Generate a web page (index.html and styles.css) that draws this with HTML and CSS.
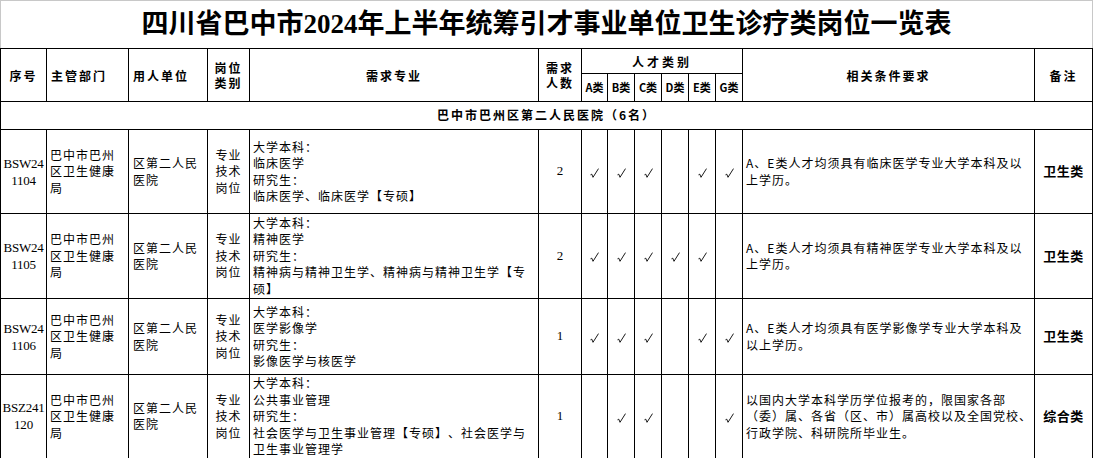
FILE: index.html
```html
<!DOCTYPE html>
<html lang="zh-CN">
<head>
<meta charset="utf-8">
<title>岗位一览表</title>
<link rel="stylesheet" href="styles.css">
</head>
<body>
<div class="sheet">
  <div class="title">四川省巴中市2024年上半年统筹引才事业单位卫生诊疗类岗位一览表</div>
  <table class="grid">
    <colgroup>
      <col class="w46"><col class="w82"><col class="w79"><col class="w42"><col class="w289"><col class="w43">
      <col class="w26"><col class="w27"><col class="w27"><col class="w27"><col class="w27"><col class="w27">
      <col class="w292"><col class="w58">
    </colgroup>
    <thead>
      <tr class="h1">
        <th rowspan="2">序号</th>
        <th rowspan="2" class="left">主管部门</th>
        <th rowspan="2" class="left">用人单位</th>
        <th rowspan="2">岗位类别</th>
        <th rowspan="2">需求专业</th>
        <th rowspan="2">需求人数</th>
        <th colspan="6" class="talent">人才类别</th>
        <th rowspan="2">相关条件要求</th>
        <th rowspan="2">备注</th>
      </tr>
      <tr class="h2">
        <th class="cat">A类</th><th class="cat">B类</th><th class="cat">C类</th><th class="cat">D类</th><th class="cat">E类</th><th class="cat">G类</th>
      </tr>
    </thead>
    <tbody>
      <tr class="section"><td colspan="14">巴中市巴州区第二人民医院（6名）</td></tr>
      <tr class="r1">
        <td class="no">BSW241104</td>
        <td class="dept">巴中市巴州区卫生健康局</td>
        <td class="unit">区第二人民医院</td>
        <td class="kind">专业技术岗位</td>
        <td class="major">大学本科：<br>临床医学<br>研究生：<br>临床医学、临床医学【专硕】</td>
        <td class="num">2</td>
        <td class="chk"><svg class="tick" viewBox="0 0 9 10" width="9" height="10"><path d="M0.5 6.8 L1.8 6.2 L3 9.3 L8.5 0.6"/></svg></td>
        <td class="chk"><svg class="tick" viewBox="0 0 9 10" width="9" height="10"><path d="M0.5 6.8 L1.8 6.2 L3 9.3 L8.5 0.6"/></svg></td>
        <td class="chk"><svg class="tick" viewBox="0 0 9 10" width="9" height="10"><path d="M0.5 6.8 L1.8 6.2 L3 9.3 L8.5 0.6"/></svg></td>
        <td class="chk"></td>
        <td class="chk"><svg class="tick" viewBox="0 0 9 10" width="9" height="10"><path d="M0.5 6.8 L1.8 6.2 L3 9.3 L8.5 0.6"/></svg></td>
        <td class="chk"><svg class="tick" viewBox="0 0 9 10" width="9" height="10"><path d="M0.5 6.8 L1.8 6.2 L3 9.3 L8.5 0.6"/></svg></td>
        <td class="req">A、E类人才均须具有临床医学专业大学本科及以<br>上学历。</td>
        <td class="note">卫生类</td>
      </tr>
      <tr class="r2">
        <td class="no">BSW241105</td>
        <td class="dept">巴中市巴州区卫生健康局</td>
        <td class="unit">区第二人民医院</td>
        <td class="kind">专业技术岗位</td>
        <td class="major">大学本科：<br>精神医学<br>研究生：<br>精神病与精神卫生学、精神病与精神卫生学【专硕】</td>
        <td class="num">2</td>
        <td class="chk"><svg class="tick" viewBox="0 0 9 10" width="9" height="10"><path d="M0.5 6.8 L1.8 6.2 L3 9.3 L8.5 0.6"/></svg></td>
        <td class="chk"><svg class="tick" viewBox="0 0 9 10" width="9" height="10"><path d="M0.5 6.8 L1.8 6.2 L3 9.3 L8.5 0.6"/></svg></td>
        <td class="chk"><svg class="tick" viewBox="0 0 9 10" width="9" height="10"><path d="M0.5 6.8 L1.8 6.2 L3 9.3 L8.5 0.6"/></svg></td>
        <td class="chk"><svg class="tick" viewBox="0 0 9 10" width="9" height="10"><path d="M0.5 6.8 L1.8 6.2 L3 9.3 L8.5 0.6"/></svg></td>
        <td class="chk"><svg class="tick" viewBox="0 0 9 10" width="9" height="10"><path d="M0.5 6.8 L1.8 6.2 L3 9.3 L8.5 0.6"/></svg></td>
        <td class="chk"></td>
        <td class="req">A、E类人才均须具有精神医学专业大学本科及以<br>上学历。</td>
        <td class="note">卫生类</td>
      </tr>
      <tr class="r3">
        <td class="no">BSW241106</td>
        <td class="dept">巴中市巴州区卫生健康局</td>
        <td class="unit">区第二人民医院</td>
        <td class="kind">专业技术岗位</td>
        <td class="major">大学本科：<br>医学影像学<br>研究生：<br>影像医学与核医学</td>
        <td class="num">1</td>
        <td class="chk"><svg class="tick" viewBox="0 0 9 10" width="9" height="10"><path d="M0.5 6.8 L1.8 6.2 L3 9.3 L8.5 0.6"/></svg></td>
        <td class="chk"><svg class="tick" viewBox="0 0 9 10" width="9" height="10"><path d="M0.5 6.8 L1.8 6.2 L3 9.3 L8.5 0.6"/></svg></td>
        <td class="chk"><svg class="tick" viewBox="0 0 9 10" width="9" height="10"><path d="M0.5 6.8 L1.8 6.2 L3 9.3 L8.5 0.6"/></svg></td>
        <td class="chk"></td>
        <td class="chk"><svg class="tick" viewBox="0 0 9 10" width="9" height="10"><path d="M0.5 6.8 L1.8 6.2 L3 9.3 L8.5 0.6"/></svg></td>
        <td class="chk"><svg class="tick" viewBox="0 0 9 10" width="9" height="10"><path d="M0.5 6.8 L1.8 6.2 L3 9.3 L8.5 0.6"/></svg></td>
        <td class="req">A、E类人才均须具有医学影像学专业大学本科及<br>以上学历。</td>
        <td class="note">卫生类</td>
      </tr>
      <tr class="r4">
        <td class="no">BSZ241120</td>
        <td class="dept">巴中市巴州区卫生健康局</td>
        <td class="unit">区第二人民医院</td>
        <td class="kind">专业技术岗位</td>
        <td class="major">大学本科：<br>公共事业管理<br>研究生：<br>社会医学与卫生事业管理【专硕】、社会医学与卫生事业管理学</td>
        <td class="num">1</td>
        <td class="chk"></td>
        <td class="chk"><svg class="tick" viewBox="0 0 9 10" width="9" height="10"><path d="M0.5 6.8 L1.8 6.2 L3 9.3 L8.5 0.6"/></svg></td>
        <td class="chk"><svg class="tick" viewBox="0 0 9 10" width="9" height="10"><path d="M0.5 6.8 L1.8 6.2 L3 9.3 L8.5 0.6"/></svg></td>
        <td class="chk"></td>
        <td class="chk"></td>
        <td class="chk"><svg class="tick" viewBox="0 0 9 10" width="9" height="10"><path d="M0.5 6.8 L1.8 6.2 L3 9.3 L8.5 0.6"/></svg></td>
        <td class="req">以国内大学本科学历学位报考的，限国家各部<br>（委）属、各省（区、市）属高校以及全国党校、<br>行政学院、科研院所毕业生。</td>
        <td class="note">综合类</td>
      </tr>
    </tbody>
  </table>
</div>
</body>
</html>
```

FILE: styles.css
```css
* { box-sizing: border-box; }

body {
  margin: 0;
  background: #fff;
  color: #000;
  font-family: "Noto Sans CJK SC", sans-serif;
  text-spacing-trim: space-all;
}

.sheet { width: 1093px; }

.title {
  height: 48px;
  border: 1px solid #c8c8c8;
  border-bottom: 0;
  display: flex;
  align-items: center;
  justify-content: center;
  font-family: "Liberation Serif", "Noto Sans CJK SC", serif;
  font-weight: 700;
  font-size: 27px;
  line-height: 1;
}

.grid {
  width: 1093px;
  border-collapse: collapse;
  table-layout: fixed;
}

.w46 { width: 46px; }
.w82 { width: 82px; }
.w79 { width: 79px; }
.w42 { width: 42px; }
.w289 { width: 289px; }
.w43 { width: 43px; }
.w26 { width: 26px; }
.w27 { width: 27px; }
.w292 { width: 292px; }
.w58 { width: 58px; }

.grid th,
.grid td {
  border: 1px solid #000;
  padding: 0 3px;
  font-size: 12px;
  line-height: 16.5px;
  letter-spacing: 1px;
  vertical-align: middle;
}

.grid th {
  font-weight: 700;
  letter-spacing: 2px;
  line-height: 15px;
  text-align: center;
}

.grid th.left { text-align: left; padding-left: 4px; }
.grid th.talent { letter-spacing: 3px; }
.grid th.cat {
  font-size: 11px;
  letter-spacing: 0;
  padding: 0;
  white-space: nowrap;
}

.h1 { height: 25px; }
.h2 { height: 28px; }
.section { height: 28px; }
.r1 { height: 84px; }
.r2 { height: 85px; }
.r3 { height: 76px; }
.r4 { height: 83px; }

.section td {
  text-align: center;
  font-weight: 700;
  letter-spacing: 2px;
}

.grid td.no {
  font-family: "Liberation Serif", serif;
  font-size: 13px;
  letter-spacing: -0.2px;
  line-height: 17px;
  text-align: center;
  word-break: break-all;
  padding: 0;
}

.grid td.dept { padding: 0 3px; }
.grid td.unit { padding: 0 3px 0 4px; }
.grid td.kind { text-align: center; }
.grid td.major { padding: 0 6px 0 3px; }

.grid td.num {
  font-family: "Liberation Serif", serif;
  font-size: 13px;
  letter-spacing: 0;
  text-align: center;
}

.grid td.chk {
  padding: 0;
  text-align: center;
}

.tick {
  display: inline-block;
  vertical-align: middle;
}

.tick path {
  fill: none;
  stroke: #000;
  stroke-width: 0.9;
}

.grid td.req { padding: 0 2px 0 3px; white-space: nowrap; }

.grid td.note {
  text-align: center;
  font-weight: 700;
  font-size: 13px;
  letter-spacing: 0.5px;
}
```
